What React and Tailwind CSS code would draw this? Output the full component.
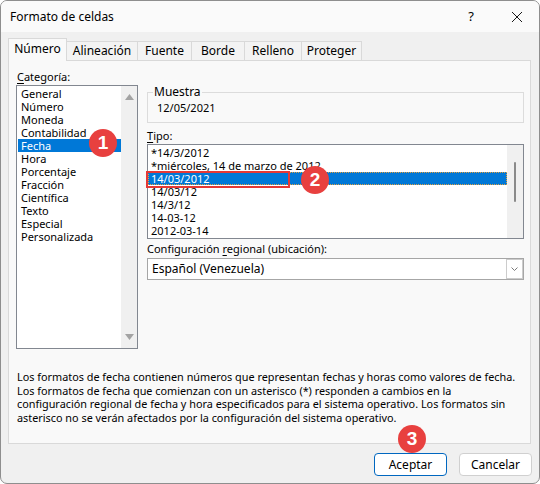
import React from 'react';

const categorias = [
  'General',
  'Número',
  'Moneda',
  'Contabilidad',
  'Fecha',
  'Hora',
  'Porcentaje',
  'Fracción',
  'Científica',
  'Texto',
  'Especial',
  'Personalizada',
];

const tipos = [
  '*14/3/2012',
  '*miércoles, 14 de marzo de 2012',
  '14/03/2012',
  '14/03/12',
  '14/3/12',
  '14-03-12',
  '2012-03-14',
];

const tabs = [
  { label: 'Alineación', w: 'w-[71px]' },
  { label: 'Fuente', w: 'w-[54px]' },
  { label: 'Borde', w: 'w-[53px]' },
  { label: 'Relleno', w: 'w-[57px]' },
  { label: 'Proteger', w: 'w-[60px]' },
];

function Badge({ n, className }) {
  return (
    <div
      className={`absolute w-[28px] h-[28px] rounded-full bg-[#e8403f] text-white flex items-center justify-center text-[19px] font-bold font-['Liberation_Sans',sans-serif] ${className}`}
    >
      {n}
    </div>
  );
}

export default function App() {
  return (
    <div className="w-[540px] h-[484px] bg-white">
      <div className="relative w-[540px] h-[484px] rounded-[7px] border border-[#8e8e8e] bg-[#f0f0f0] overflow-hidden font-['Noto_Sans',sans-serif] text-[11px] text-black">
        {/* Barra de título */}
        <div className="h-[31px] bg-[#fafafa] flex items-center pl-[9px] text-[12px]">
          <span>Formato de celdas</span>
          <span className="ml-auto w-[12px] text-center text-[13px] mr-[34px]">?</span>
          <svg width="12" height="12" viewBox="0 0 12 12" className="mr-[16px]">
            <path d="M1 1 L11 11 M11 1 L1 11" stroke="#1a1a1a" strokeWidth="1" fill="none" />
          </svg>
        </div>

        {/* Pestañas */}
        <div className="flex items-end pl-[7px] h-[28px]">
          <div className="relative z-10 -mb-px w-[59px] h-[23px] border border-b-0 border-[#d9d9d9] bg-[#f9f9f9] flex items-center justify-center text-[12px] pb-[2px]">
            Número
          </div>
          {tabs.map((t) => (
            <div
              key={t.label}
              className={`${t.w} h-[19px] border border-l-0 border-b-0 border-[#d9d9d9] bg-[#f3f3f3] flex items-center justify-center text-[12px]`}
            >
              {t.label}
            </div>
          ))}
        </div>

        {/* Panel */}
        <div className="ml-[7px] w-[523px] h-[384px] border border-[#d9d9d9] bg-[#f9f9f9] pl-[7px] pt-[8px]">
          <div className="flex">
            {/* Categoría */}
            <div className="w-[122px]">
              <div className="h-[16px] leading-[16px] pl-[1px]">
                <span className="underline underline-offset-2">C</span>ategoría:
              </div>
              <div className="h-[264px] border border-[#828790] bg-white flex">
                <div className="flex-1 pt-[1px] pl-[1px]">
                  {categorias.map((c) => (
                    <div
                      key={c}
                      className={`h-[13px] leading-[13px] pl-[3px] whitespace-nowrap ${
                        c === 'Fecha' ? 'bg-[#0078d7] text-white' : ''
                      }`}
                    >
                      {c}
                    </div>
                  ))}
                </div>
                <div className="w-[16px] bg-[#f0f0f0] flex flex-col items-center justify-between py-[8px]">
                  <svg width="9" height="6" viewBox="0 0 9 6">
                    <path d="M0 6 L4.5 0 L9 6 Z" fill="#a3a3a3" />
                  </svg>
                  <svg width="9" height="6" viewBox="0 0 9 6">
                    <path d="M0 0 L9 0 L4.5 6 Z" fill="#a3a3a3" />
                  </svg>
                </div>
              </div>
            </div>

            {/* Columna derecha */}
            <div className="ml-[9px] w-[377px]">
              <div className="relative mt-[23px] h-[31px] border border-[#dcdcdc] flex items-center pl-[9px]">
                <span className="absolute -top-[8px] left-[5px] px-[1px] bg-[#f9f9f9] leading-[14px] text-[12px]">
                  Muestra
                </span>
                <span className="pt-[2px]">12/05/2021</span>
              </div>

              <div className="h-[21px] pt-[6px] leading-[13px]">
                <span className="underline underline-offset-2">T</span>ipo:
              </div>
              <div className="h-[95px] border border-[#828790] bg-white flex">
                <div className="flex-1 pt-[1px]">
                  {tipos.map((t) => (
                    <div
                      key={t}
                      className={`h-[13px] leading-[13px] pl-[3px] whitespace-nowrap ${
                        t === '14/03/2012'
                          ? 'bg-[#0078d7] text-white outline-1 outline-dotted -outline-offset-1 outline-[#e0a040]'
                          : ''
                      }`}
                    >
                      {t}
                    </div>
                  ))}
                </div>
                <div className="w-[16px] bg-[#f0f0f0] flex justify-center pt-[17px]">
                  <div className="w-[2px] h-[40px] bg-[#8a8a8a] rounded-full" />
                </div>
              </div>

              <div className="h-[19px] pt-[3px] leading-[13px]">
                Configuración <span className="underline underline-offset-2">r</span>egional (ubicación):
              </div>
              <div className="h-[22px] border border-[#a6a6a6] bg-white flex items-center">
                <span className="pl-[4px] text-[12px]">Español (Venezuela)</span>
                <div className="ml-auto w-[17px] h-[20px] border border-[#cccccc] bg-white flex items-center justify-center">
                  <svg width="7" height="4" viewBox="0 0 7 4">
                    <path d="M0.5 0.5 L3.5 3.5 L6.5 0.5" stroke="#6b6b6b" strokeWidth="0.9" fill="none" />
                  </svg>
                </div>
              </div>
            </div>
          </div>

          {/* Descripción */}
          <div className="mt-[21px] leading-[13.7px] pl-[1px] whitespace-nowrap text-[10.85px]">
            <div>Los formatos de fecha contienen números que representan fechas y horas como valores de fecha.</div>
            <div>Los formatos de fecha que comienzan con un asterisco (*) responden a cambios en la</div>
            <div>configuración regional de fecha y hora especificados para el sistema operativo. Los formatos sin</div>
            <div>asterisco no se verán afectados por la configuración del sistema operativo.</div>
          </div>
        </div>

        {/* Botones */}
        <div className="flex justify-end gap-[12px] mt-[9px] pr-[7px]">
          <button className="w-[73px] h-[23px] rounded-[4px] border border-[#0067c0] bg-white text-[12px]">
            Aceptar
          </button>
          <button className="w-[73px] h-[23px] rounded-[4px] border border-[#d0d0d0] bg-white text-[12px]">
            Cancelar
          </button>
        </div>

        {/* Marcas */}
        <div className="absolute left-[145px] top-[170px] w-[144px] h-[17px] border-2 border-[#e53935]" />
        <Badge n="1" className="left-[88px] top-[128px]" />
        <Badge n="2" className="left-[300px] top-[165px]" />
        <Badge n="3" className="left-[397px] top-[424px]" />
      </div>
    </div>
  );
}
